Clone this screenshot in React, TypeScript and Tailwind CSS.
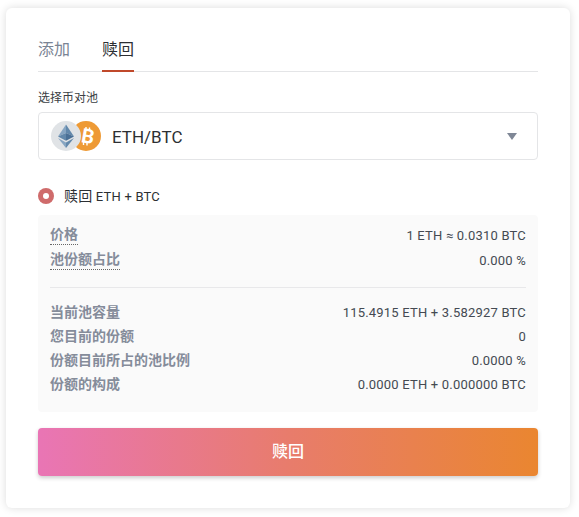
const font = "font-['Roboto','Noto_Sans_CJK_SC',sans-serif]";

function PoolIcons() {
  return (
    <div className="flex items-center">
      <svg width="30" height="30" viewBox="0 0 30 30" className="relative z-10">
        <circle cx="15" cy="15" r="15" fill="#e0e3e6" />
        <polygon points="15,3.5 7,15.4 15,12" fill="#86a5c2" />
        <polygon points="15,3.5 23,15.4 15,12" fill="#6288ab" />
        <polygon points="7,15.4 15,19.8 15,12" fill="#6288ab" />
        <polygon points="23,15.4 15,19.8 15,12" fill="#4a7096" />
        <polygon points="7,17 15,27 15,21.4" fill="#86a5c2" />
        <polygon points="23,17 15,27 15,21.4" fill="#6288ab" />
      </svg>
      <svg width="30" height="30" viewBox="0 0 30 30" className="-ml-[10px]">
        <circle cx="15" cy="15" r="15" fill="#ee9a35" />
        <text
          x="17"
          y="22"
          textAnchor="middle"
          fontSize="20"
          fontWeight="700"
          fill="#fff"
          fontFamily="Roboto, sans-serif"
          transform="rotate(10 16 15)"
        >
          B
        </text>
        <path d="M15 6v3M18.5 6.5v3M12.5 21v3M16 21.5v3" stroke="#fff" strokeWidth="1.4" />
      </svg>
    </div>
  );
}

function InfoRow({ label, value, dotted }: { label: string; value: string; dotted?: boolean }) {
  return (
    <div className="flex justify-between items-center h-6">
      <span
        className={
          dotted
            ? 'text-sm leading-[19px] font-bold text-[#858c9a] border-b border-dotted border-[#666]'
            : 'text-sm font-bold text-[#858c9a]'
        }
      >
        {label}
      </span>
      <span className="text-[13px] tracking-[0.2px] text-[#444a52] translate-y-[0.5px]">{value}</span>
    </div>
  );
}

export default function App() {
  return (
    <div className={`w-[579px] h-[517px] bg-white pt-2 pl-[6px] ${font}`}>
      <div className="w-[564px] h-[500px] bg-white rounded-md shadow-[0_0_8px_rgba(0,0,0,0.14)] px-8 pt-[28px]">
        <div className="flex gap-8 border-b border-[#e4e5e7] h-[36px]">
          <div className="text-base leading-[28px] text-[#7a8494]">添加</div>
          <div className="text-base leading-[28px] text-[#2c2f33] h-[36px] border-b-2 border-[#c0492b]">赎回</div>
        </div>

        <div className="text-xs leading-4 text-[#3a3e44] mt-[18px]">选择币对池</div>

        <div className="mt-[6px] h-12 border border-[#e4e5e7] rounded flex items-center justify-between pl-[12px] pr-[20px]">
          <div className="flex items-center gap-[11px]">
            <PoolIcons />
            <span className="text-[17px] leading-[30px] pt-[1px] text-[#2c2f33]">ETH/BTC</span>
          </div>
          <div className="w-0 h-0 border-x-[5px] border-x-transparent border-t-[7px] border-t-[#7f8796]" />
        </div>

        <div className="mt-[28px] flex items-center h-4 gap-[10px]">
          <div className="w-4 h-4 rounded-full bg-[#cf6b6b] flex items-center justify-center">
            <div className="w-[6px] h-[6px] rounded-full bg-white" />
          </div>
          <span className="text-[13px] tracking-[0.2px] pt-[1px] text-[#2c2f33]">
            <span className="text-sm">赎回</span> ETH + BTC
          </span>
        </div>

        <div className="mt-[11px] h-[197px] bg-[#fafafa] rounded px-3 pt-[8px]">
          <div className="flex flex-col gap-[1px]">
            <InfoRow label="价格" value="1 ETH ≈ 0.0310 BTC" dotted />
            <InfoRow label="池份额占比" value="0.000 %" dotted />
          </div>
          <div className="border-t border-[#e8e8ea] mt-[15px] mb-[12px]" />
          <InfoRow label="当前池容量" value="115.4915 ETH + 3.582927 BTC" />
          <InfoRow label="您目前的份额" value="0" />
          <InfoRow label="份额目前所占的池比例" value="0.0000 %" />
          <InfoRow label="份额的构成" value="0.0000 ETH + 0.000000 BTC" />
        </div>

        <button className="mt-4 w-full h-12 rounded bg-linear-to-r/srgb from-[#e975b5] via-[#e87c6c] to-[#ea8630] text-base font-medium text-white shadow-[0_2px_4px_rgba(0,0,0,0.2)]">
          赎回
        </button>
      </div>
    </div>
  );
}
